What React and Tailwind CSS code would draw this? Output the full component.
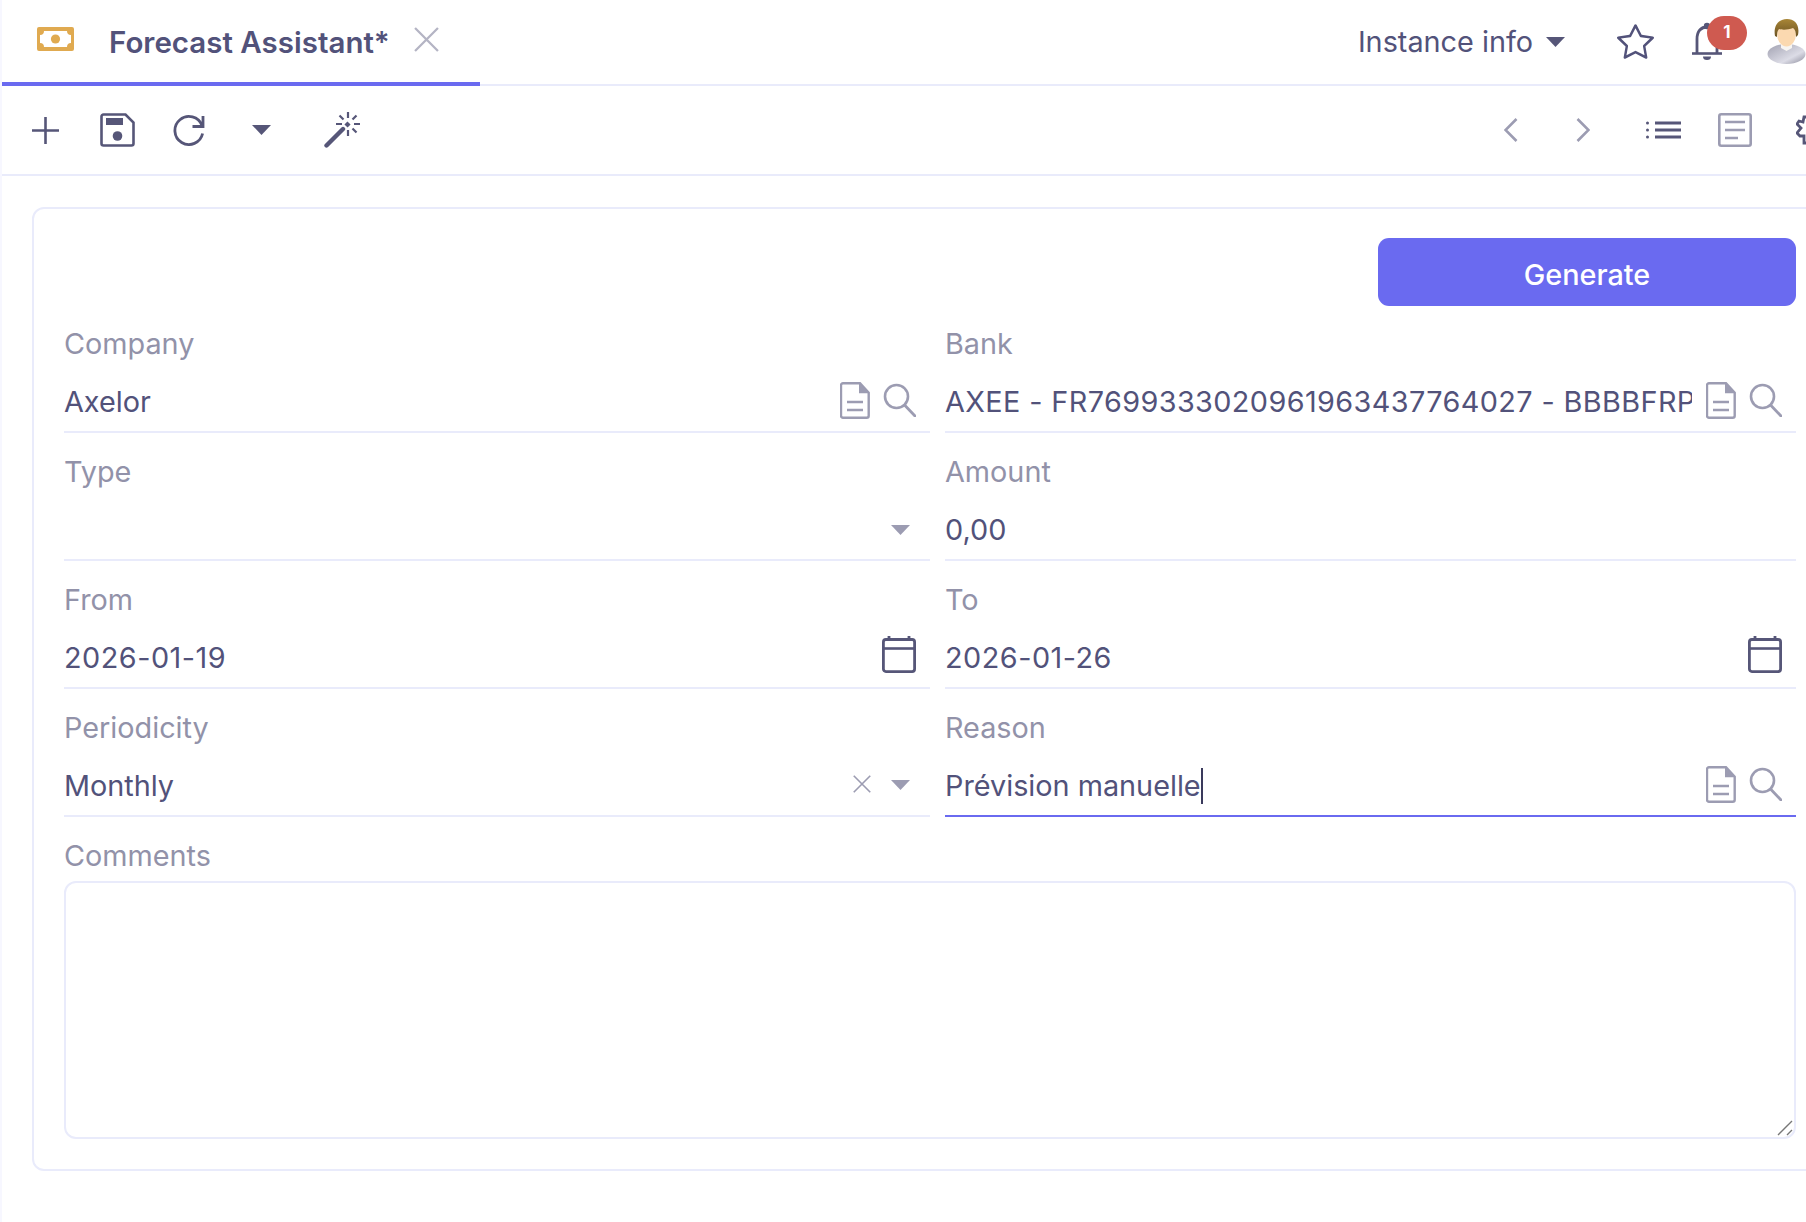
import { BsStar } from "react-icons/bs";

const ink = "#565678";
const soft = "#9c9cb2";

// iconos dibujados a mano
const Money = () => (
    <svg width="37" height="24" viewBox="0 0 37 24">
        <path fillRule="evenodd" fill="#e0aa50" d="M2 0h33a2 2 0 0 1 2 2v20a2 2 0 0 1-2 2H2a2 2 0 0 1-2-2V2a2 2 0 0 1 2-2zM7 4a4 4 0 0 1-4 4v8a4 4 0 0 1 4 4h23a4 4 0 0 1 4-4V8a4 4 0 0 1-4-4z" />
        <circle cx="18.5" cy="12" r="4.6" fill="#e0aa50" />
    </svg>
);

const Cross = ({ size, color, width }) => (
    <svg width={size} height={size} viewBox="0 0 24 24">
        <path d="M1 1l22 22M23 1L1 23" stroke={color} strokeWidth={width} fill="none" />
    </svg>
);

const Plus = () => (
    <svg width="27" height="27" viewBox="0 0 27 27">
        <path d="M13.5 0v27M0 13.5h27" stroke={ink} strokeWidth="2.6" fill="none" />
    </svg>
);

const Save = () => (
    <svg width="35" height="34" viewBox="0 0 35 34">
        <path d="M3.5 1.5h22l8 8v21a2 2 0 0 1-2 2h-28a2 2 0 0 1-2-2v-27a2 2 0 0 1 2-2z" stroke={ink} strokeWidth="2.6" fill="none" />
        <rect x="6" y="5" width="17" height="7" fill={ink} />
        <circle cx="17.5" cy="23" r="4.8" fill={ink} />
    </svg>
);

const Reload = () => (
    <svg width="32" height="32" viewBox="0 0 32 32">
        <path d="M29 11.500A14 14 0 1 0 29.600 19.500" stroke={ink} strokeWidth="2.800" fill="none" />
        <path d="M30 2v10.500H19.500" stroke={ink} strokeWidth="2.800" fill="none" />
    </svg>
);

const Caret = ({ color = ink, w = 19, h = 10 }) => (
    <svg width={w} height={h} viewBox="0 0 19 10">
        <path d="M0 0h19l-9.5 10z" fill={color} />
    </svg>
);

const Wand = () => (
    <svg width="36" height="36" viewBox="0 0 36 36">
        <path d="M2.5 33.5L19 17" stroke={ink} strokeWidth="4.4" strokeLinecap="round" fill="none" />
        <path d="M22 14l3-3" stroke={ink} strokeWidth="4.4" fill="none" />
        <path d="M24 0v6M24 18v6M12 12h6M30 12h6M15.5 3.5l4 4M32.5 3.5l-4 4M28.5 16.5l4 4" stroke={ink} strokeWidth="2.2" fill="none" />
    </svg>
);

const Chevron = ({ flip }) => (
    <svg width="14" height="24" viewBox="0 0 14 24">
        <path d={flip ? "M1.5 1l11 11-11 11" : "M12.5 1l-11 11 11 11"} stroke={soft} strokeWidth="2.6" fill="none" />
    </svg>
);

const ListIcon = () => (
    <svg width="35" height="20" viewBox="0 0 35 20">
        <path d="M9 3h26M9 10h26M9 17h26" stroke={ink} strokeWidth="2.8" fill="none" />
        <circle cx="1.5" cy="3" r="1.5" fill={ink} />
        <circle cx="1.5" cy="10" r="1.5" fill={ink} />
        <circle cx="1.5" cy="17" r="1.5" fill={ink} />
    </svg>
);

const FormIcon = () => (
    <svg width="34" height="34" viewBox="0 0 34 34">
        <rect x="1.3" y="1.3" width="31.4" height="31.4" rx="2" stroke={soft} strokeWidth="2.6" fill="none" />
        <path d="M7 9h20M7 17h20M7 25h13" stroke={soft} strokeWidth="2.6" fill="none" />
    </svg>
);

const Puzzle = () => (
    <svg width="34" height="30" viewBox="0 0 34 30">
        <path d="M14 2H8L7 7 3 6 1 9l4 4-4 5 3 3h4v7h9" stroke={ink} strokeWidth="2.800" fill="none" />
    </svg>
);

const Bell = () => (
    <svg width="30" height="38" viewBox="0 0 30 38">
        <path d="M5 31V17C5 9 9 5 15 5s10 4 10 12v14" stroke={ink} strokeWidth="2.8" fill="none" />
        <path d="M0 31.500h30" stroke={ink} strokeWidth="2.600" fill="none" />
        <circle cx="15" cy="4" r="3.2" fill={ink} />
        <path d="M11 34.500h8a4 3.500 0 0 1-8 0z" fill={ink} />
    </svg>
);

const Avatar = () => (
    <svg width="39" height="45" viewBox="0 0 39 45">
        <defs>
            <linearGradient id="body" x1="0" y1="0" x2="1" y2="1">
                <stop offset="0" stopColor="#a0a0b0" />
                <stop offset="0.65" stopColor="#dcdce6" />
                <stop offset="1" stopColor="#8a8a9a" />
            </linearGradient>
            <linearGradient id="hair" x1="0" y1="0" x2="0" y2="1">
                <stop offset="0" stopColor="#a98636" />
                <stop offset="1" stopColor="#6b5324" />
            </linearGradient>
        </defs>
        <ellipse cx="19.500" cy="35" rx="19" ry="10" fill="url(#body)" />
        <path d="M14 25h11v4l-5.500 3-5.500-3z" fill="#f7f5f2" />
        <ellipse cx="19.500" cy="15" rx="9.500" ry="12.500" fill="#fbd9b0" />
        <path d="M8 17C6 6 12 0 20 0s13 6 11 16l-2 2c0-5-1-8-3-9-5 2-11 2-14 1-2 2-2 5-2 8z" fill="url(#hair)" />
    </svg>
);

const DocIcon = () => (
    <svg width="30" height="37" viewBox="0 0 30 37">
        <path d="M3 1.300h17l8.700 9.500v23a2 2 0 0 1-2 2H3a2 2 0 0 1-2-2v-30.500a2 2 0 0 1 2-2z" stroke={soft} strokeWidth="2.400" fill="none" />
        <path d="M19 1.300l10 10H19z" fill={soft} />
        <path d="M7 20h16M7 28h16" stroke={soft} strokeWidth="2.400" fill="none" />
    </svg>
);

const SearchIcon = () => (
    <svg width="33" height="34" viewBox="0 0 33 34">
        <circle cx="13.500" cy="13.500" r="11.500" stroke={soft} strokeWidth="2.600" fill="none" />
        <path d="M22 22.500l10 10.500" stroke={soft} strokeWidth="2.800" strokeLinecap="round" fill="none" />
    </svg>
);

const CalendarIcon = () => (
    <svg className="mb-[3px]" width="34" height="37" viewBox="0 0 34 37">
        <rect x="1.400" y="3.500" width="31.200" height="32.100" rx="2.500" stroke={ink} strokeWidth="2.800" fill="none" />
        <path d="M1 12.500h32" stroke={ink} strokeWidth="2.600" fill="none" />
        <path d="M7 0v4M27 0v4" stroke={ink} strokeWidth="2.800" fill="none" />
    </svg>
);

const Field = ({ label, focus, children }) => (
    <div className="flex h-[128px] flex-col justify-end">
        <label className="mb-[9px] h-[36px] text-[28.8px] leading-[36px] text-[#9292a9]">{label}</label>
        <div className={`flex h-[62px] items-center border-b-2 pb-[2px] pr-[14px] text-[28.8px] text-[#52527a] ${focus ? "border-[#6a6af0]" : "border-[#e9ebfb]"}`}>
            {children}
        </div>
    </div>
);

const Value = ({ className = "", children }) => (
    <span className={`mt-[4px] min-w-0 whitespace-nowrap ${className}`}>{children}</span>
);

const Refs = () => (
    <div className="flex shrink-0 items-center gap-[13px]">
        <DocIcon />
        <SearchIcon />
    </div>
);

const ToolBtn = ({ children }) => (
    <button className="flex h-full w-[72px] items-center justify-center">{children}</button>
);

export default function App() {
    return (
        <div className="h-[1222px] w-full overflow-hidden border-l-2 border-[#f7f7ff] bg-white [font-family:Inter,sans-serif]">

            {/* Barra de pestañas */}
            <div className="flex h-[86px] items-start border-b-2 border-[#e9ebfb]">
                <div className="-mb-[2px] flex h-[86px] w-[478px] items-center border-b-4 border-[#6a6af0] pb-[4px] pl-[35px]">
                    <Money />
                    <span className="ml-[35px] mt-[6px] text-[29.5px] font-semibold text-[#52527a]">Forecast Assistant*</span>
                    <span className="ml-[24px]"><Cross size={25} color="#b4b4c4" width={2.2} /></span>
                </div>
                <div className="ml-auto flex h-[84px] items-center">
                    <span className="text-[28.8px] text-[#52527a]">Instance info</span>
                    <span className="ml-[13px]"><Caret /></span>
                    <span className="mb-[2px] ml-[52px] text-[37px] text-[#52527a]"><BsStar /></span>
                    <div className="relative mb-[2px] ml-[38px] h-[38px] w-[30px]">
                        <Bell />
                        <span className="absolute -top-[6px] left-[15px] flex h-[34px] w-[40px] items-center justify-center rounded-full bg-[#cf5a50] text-[17px] font-bold text-white">1</span>
                    </div>
                    <span className="mb-[2px] ml-[45px]"><Avatar /></span>
                </div>
            </div>

            {/* Barra de herramientas */}
            <div className="flex h-[90px] items-center border-b-2 border-[#e9ebfb] pl-[7px]">
                <ToolBtn><Plus /></ToolBtn>
                <ToolBtn><Save /></ToolBtn>
                <ToolBtn><Reload /></ToolBtn>
                <ToolBtn><Caret /></ToolBtn>
                <div className="ml-[9px] h-full"><ToolBtn><Wand /></ToolBtn></div>
                <div className="-mr-[37px] ml-auto flex h-full">
                    <ToolBtn><Chevron /></ToolBtn>
                    <ToolBtn><Chevron flip /></ToolBtn>
                    <div className="ml-[8px] h-full"><ToolBtn><ListIcon /></ToolBtn></div>
                    <ToolBtn><FormIcon /></ToolBtn>
                    <ToolBtn><span className="ml-[12px]"><Puzzle /></span></ToolBtn>
                </div>
            </div>

            {/* Formulario */}
            <div className="ml-[30px] mt-[31px] w-[1830px] rounded-[12px] border-2 border-[#e9ebfb] pb-[30px] pl-[30px] pt-[29px]">
                <div className="w-[1732px]">
                    <div className="flex justify-end">
                        <button className="h-[68px] w-[418px] rounded-[11px] bg-[#6a6af0] pt-[6px] text-[28.8px] font-medium text-white">Generate</button>
                    </div>

                    <div className="-mt-px grid grid-cols-[866px_851px] gap-x-[15px]">
                        <Field label="Company">
                            <Value className="flex-1">Axelor</Value>
                            <Refs />
                        </Field>
                        <Field label="Bank">
                            <Value className="flex-1 overflow-hidden tracking-[0.4px]">AXEE - FR7699333020961963437764027 - BBBBFRPP</Value>
                            <span className="ml-[14px]"><Refs /></span>
                        </Field>
                        <Field label="Type">
                            <span className="flex-1"></span>
                            <span className="mr-[6px] mt-[4px]"><Caret color={soft} /></span>
                        </Field>
                        <Field label="Amount"><Value>0,00</Value></Field>
                        <Field label="From">
                            <Value className="flex-1 tracking-[0.5px]">2026-01-19</Value>
                            <CalendarIcon />
                        </Field>
                        <Field label="To">
                            <Value className="flex-1 tracking-[0.5px]">2026-01-26</Value>
                            <CalendarIcon />
                        </Field>
                        <Field label="Periodicity">
                            <Value className="flex-1">Monthly</Value>
                            <Cross size={18} color={soft} width={2.2} />
                            <span className="ml-[20px] mr-[6px] mt-[2px]"><Caret color={soft} /></span>
                        </Field>
                        <Field label="Reason" focus>
                            <Value className="border-r-2 border-[#3a3a5c] leading-[36px]">Prévision manuelle</Value>
                            <span className="ml-auto"><Refs /></span>
                        </Field>
                    </div>

                    <label className="mt-[21px] block h-[36px] text-[28.8px] leading-[36px] text-[#9292a9]">Comments</label>
                    <div className="relative mt-[7px]">
                        <textarea className="block h-[258px] w-full resize-none rounded-[12px] border-2 border-[#e9ebfb] outline-none"></textarea>
                        {/* asa de redimensionado */}
                        <svg className="absolute bottom-[3px] right-[3px]" width="16" height="16" viewBox="0 0 16 16">
                            <path d="M1 15L15 1M10 15l5-5" stroke="#777" strokeWidth="1.400" fill="none" />
                        </svg>
                    </div>
                </div>
            </div>
        </div>
    );
}
